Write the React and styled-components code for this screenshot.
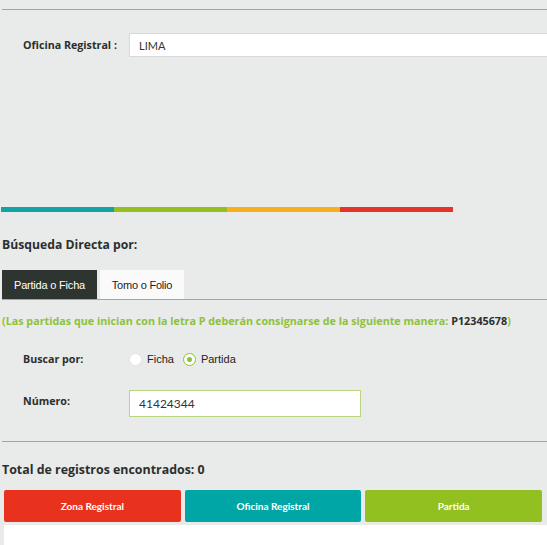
import React, { useState } from 'react';
import styled, { createGlobalStyle } from 'styled-components';

const GlobalStyle = createGlobalStyle`
  html, body {
    margin: 0;
    padding: 0;
    background: #e9eaea;
  }
  body {
    font-family: "Open Sans", Lato, Arial, sans-serif;
    color: #2b2f2d;
  }
`;

const bars = ['#13a3a5', '#93c01f', '#f6b01b', '#e5352a'];

const columns = [
  { label: 'Zona Registral', color: '#e8321e' },
  { label: 'Oficina Registral', color: '#00a6a6' },
  { label: 'Partida', color: '#92c021' },
];

function App() {
  const [mode, setMode] = useState('partida');
  const [tab, setTab] = useState(0);
  const [numero, setNumero] = useState('41424344');

  return (
    <Page>
      <GlobalStyle />
      <Rule />
      <OfficeRow>
        <Label>Oficina Registral :</Label>
        <OfficeInput value="LIMA" readOnly />
      </OfficeRow>

      <ColorBar>
        {bars.map((c) => (
          <BarPart key={c} $color={c} />
        ))}
      </ColorBar>

      <Heading>Búsqueda Directa por:</Heading>

      <Tabs>
        <Tab $active={tab === 0} $w={95} onClick={() => setTab(0)}>Partida o Ficha</Tab>
        <Tab $active={tab === 1} $w={84} onClick={() => setTab(1)}>Tomo o Folio</Tab>
      </Tabs>

      <Note>
        (Las partidas que inician con la letra P deberán consignarse de la siguiente manera: <b>P12345678</b>)
      </Note>

      <FormRow>
        <Label>Buscar por:</Label>
        <Radios>
          <RadioItem onClick={() => setMode('ficha')}>
            <Circle $on={mode === 'ficha'} />
            Ficha
          </RadioItem>
          <RadioItem onClick={() => setMode('partida')}>
            <Circle $on={mode === 'partida'} />
            Partida
          </RadioItem>
        </Radios>
      </FormRow>

      <NumberRow>
        <Label>Número:</Label>
        <NumberInput value={numero} onChange={(e) => setNumero(e.target.value)} />
      </NumberRow>

      <Rule $top={24} />

      <Total>Total de registros encontrados: 0</Total>

      <Columns>
        {columns.map((c) => (
          <ColButton key={c.label} $color={c.color}>{c.label}</ColButton>
        ))}
      </Columns>
      <Results />
    </Page>
  );
}

export default App;

const Page = styled.div`
  width: 547px;
  height: 545px;
  overflow: hidden;
  padding-top: 9px;
  box-sizing: border-box;
`;

const Rule = styled.div`
  margin: ${(p) => p.$top || 0}px 0 0 2px;
  height: 1px;
  background: #a3a5a4;
`;

const OfficeRow = styled.div`
  display: flex;
  align-items: center;
  margin-top: 23px;
  padding-left: 23px;
`;

const Label = styled.div`
  width: 106px;
  flex-shrink: 0;
  font-size: 10.7px;
  font-weight: 700;
  color: #2b2f2d;
`;

const OfficeInput = styled.input`
  flex: 1;
  height: 24px;
  box-sizing: border-box;
  border: 1px solid #d8d9d9;
  border-right: none;
  background: #fff;
  padding: 0 9px;
  font-family: Lato, sans-serif;
  font-size: 11px;
  color: #333;
  outline: none;
`;

const ColorBar = styled.div`
  display: flex;
  width: 452px;
  height: 5px;
  margin: 150px 0 0 1px;
`;

const BarPart = styled.div`
  flex: 1;
  background: ${(p) => p.$color};
`;

const Heading = styled.div`
  margin: 25px 0 0 2px;
  font-size: 12.2px;
  line-height: 16px;
  font-weight: 700;
  color: #2b2f2d;
`;

const Tabs = styled.div`
  display: flex;
  gap: 3px;
  margin: 17px 0 0 2px;
  border-bottom: 1px solid #a3a5a4;
`;

const Tab = styled.div`
  width: ${(p) => p.$w}px;
  height: 29px;
  display: flex;
  align-items: center;
  justify-content: center;
  font-family: "Liberation Sans", Arial, sans-serif;
  font-size: 11px;
  letter-spacing: -0.2px;
  background: ${(p) => (p.$active ? '#2e3531' : '#fafafa')};
  color: ${(p) => (p.$active ? '#fff' : '#222')};
  cursor: pointer;
`;

const Note = styled.div`
  margin: 14px 0 0 2px;
  font-size: 10.75px;
  line-height: 14px;
  font-weight: 700;
  color: #8dc23a;
  white-space: nowrap;

  b {
    color: #2b2f2d;
    font-weight: 700;
  }
`;

const FormRow = styled.div`
  display: flex;
  align-items: center;
  height: 20px;
  margin-top: 21px;
  padding-left: 23px;
`;

const Radios = styled.div`
  display: flex;
  align-items: center;
  gap: 9px;
`;

const RadioItem = styled.label`
  display: flex;
  align-items: center;
  gap: 5px;
  font-family: "Liberation Sans", Arial, sans-serif;
  font-size: 11px;
  color: #222;
  cursor: pointer;
`;

const Circle = styled.span`
  width: 11px;
  height: 11px;
  border-radius: 50%;
  background: #fff;
  border: 1px solid ${(p) => (p.$on ? '#8dc23a' : '#e4e4e4')};
  display: flex;
  align-items: center;
  justify-content: center;

  &::after {
    content: '';
    width: 5px;
    height: 5px;
    border-radius: 50%;
    background: ${(p) => (p.$on ? '#8dc23a' : 'transparent')};
  }
`;

const NumberRow = styled.div`
  display: flex;
  align-items: flex-start;
  margin-top: 21px;
  padding-left: 23px;

  ${Label} {
    padding-top: 4px;
  }
`;

const NumberInput = styled.input`
  width: 232px;
  height: 27px;
  box-sizing: border-box;
  border: 1px solid #b9d67f;
  background: #fff;
  padding: 0 9px;
  font-family: Lato, sans-serif;
  font-size: 12px;
  color: #333;
  outline: none;
`;

const Total = styled.div`
  margin: 20px 0 0 2px;
  font-size: 12.4px;
  line-height: 16px;
  font-weight: 700;
  color: #2b2f2d;
`;

const Columns = styled.div`
  display: flex;
  gap: 4px;
  margin-top: 12px;
  padding: 0 5px 0 4px;
`;

const ColButton = styled.div`
  flex: 1;
  height: 32px;
  border-radius: 2px;
  background: ${(p) => p.$color};
  color: #fff;
  display: flex;
  align-items: center;
  justify-content: center;
  font-family: Lato, sans-serif;
  font-size: 10px;
  font-weight: 700;
`;

const Results = styled.div`
  margin: 3px 0 0 4px;
  height: 40px;
  background: #fff;
`;
